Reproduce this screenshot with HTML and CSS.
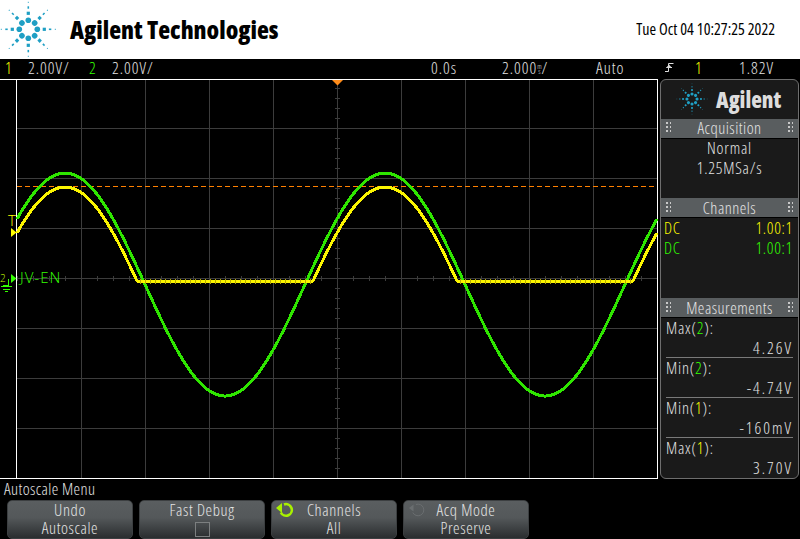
FILE: index.html
```html
<!DOCTYPE html>
<html lang="en">
<head>
    <meta charset="UTF-8">
    <title>Agilent Technologies</title>
    <link rel="stylesheet" href="styles.css">
</head>
<body>
    <!-- Shared logo star -->
    <svg class="defs" width="0" height="0">
        <defs>
            <g id="spoke">
                <circle cx="0" cy="-9" r="2.8"/>
                <rect x="-1.6" y="-17.6" width="3.2" height="3.2"/>
                <rect x="-0.8" y="-23" width="1.6" height="2.4"/>
                <rect x="-0.5" y="-27.5" width="1" height="1"/>
            </g>
            <g id="star">
                <use href="#spoke"/>
                <use href="#spoke" transform="rotate(45)"/>
                <use href="#spoke" transform="rotate(90)"/>
                <use href="#spoke" transform="rotate(135)"/>
                <use href="#spoke" transform="rotate(180)"/>
                <use href="#spoke" transform="rotate(225)"/>
                <use href="#spoke" transform="rotate(270)"/>
                <use href="#spoke" transform="rotate(315)"/>
            </g>
        </defs>
    </svg>

    <!-- Header -->
    <header class="brand">
        <svg class="brand-logo" width="58" height="58" viewBox="0 0 58 58">
            <use href="#star" transform="translate(28.3 28.3)"/>
        </svg>
        <div class="brand-name">Agilent Technologies</div>
        <div class="brand-date">Tue Oct 04 10:27:25 2022</div>
    </header>

    <!-- Status line -->
    <div class="status">
        <span class="ch1">1</span>
        <span>2.00V/</span>
        <span class="ch2">2</span>
        <span>2.00V/</span>
        <span>0.0s</span>
        <span class="time-scale">2.000<span class="stacked">m<br>s</span>/</span>
        <span>Auto</span>
        <svg class="edge-icon" width="9" height="11" viewBox="0 0 9 11">
            <path d="M0 9.5H3.5V1.5H8.5M1.5 5.5H7" fill="none" stroke="#ddd" stroke-width="1"/>
            <path d="M4 2.5L7 6H1Z" fill="#ddd"/>
        </svg>
        <span class="ch1">1</span>
        <span>1.82V</span>
    </div>

    <!-- Scope display and sidebar -->
    <main class="scope">
        <svg id="plot" class="plot" width="658" height="400" viewBox="0 79 658 400"></svg>

        <aside class="sidebar">
            <div class="side-logo">
                <svg width="36" height="36" viewBox="-18 -18 36 36">
                    <use href="#star" transform="scale(0.56)"/>
                </svg>
                <span>Agilent</span>
            </div>

            <div class="side-title"><b class="grip"></b>Acquisition<b class="grip"></b></div>
            <div class="side-block acq">
                <p>Normal</p>
                <p>1.25MSa/s</p>
            </div>

            <div class="side-title"><b class="grip"></b>Channels<b class="grip"></b></div>
            <div class="side-block channels">
                <p class="ch1"><span>DC</span><span>1.00:1</span></p>
                <p class="ch2"><span>DC</span><span>1.00:1</span></p>
            </div>

            <div class="side-title"><b class="grip"></b>Measurements<b class="grip"></b></div>
            <div class="measure">
                <div class="meas-item">
                    <p>Max(<span class="ch2">2</span>):</p>
                    <p class="meas-value">4.26V</p>
                </div>
                <div class="meas-item">
                    <p>Min(<span class="ch2">2</span>):</p>
                    <p class="meas-value">-4.74V</p>
                </div>
                <div class="meas-item">
                    <p>Min(<span class="ch1">1</span>):</p>
                    <p class="meas-value">-160mV</p>
                </div>
                <div class="meas-item">
                    <p>Max(<span class="ch1">1</span>):</p>
                    <p class="meas-value">3.70V</p>
                </div>
            </div>
        </aside>
    </main>

    <!-- Softkeys -->
    <div class="menu-title">Autoscale Menu</div>
    <div class="softkeys">
        <div class="softkey"><span>Undo</span><span>Autoscale</span></div>
        <div class="softkey"><span>Fast Debug</span><b class="checkbox"></b></div>
        <div class="softkey">
            <svg class="knob" width="18" height="18" viewBox="0 0 18 18">
                <path d="M8 3.5A5.8 5.8 0 1 1 4.8 11.5" fill="none" stroke="#a8f000" stroke-width="2.6"/>
                <path d="M0 7L6 2V12Z" fill="#a8f000"/>
            </svg>
            <span>Channels</span><span>All</span>
        </div>
        <div class="softkey">
            <svg class="knob" width="18" height="18" viewBox="0 0 18 18">
                <path d="M8 3.5A5.8 5.8 0 1 1 4.8 11.5" fill="none" stroke="#6a6e70" stroke-width="1"/>
                <path d="M1 7L5.5 3.5V10.5Z" fill="#6a6e70"/>
            </svg>
            <span>Acq Mode</span><span>Preserve</span>
        </div>
    </div>

    <script src="scope.js"></script>
</body>
</html>
```

FILE: styles.css
```css
/* === Shared === */
:root {
    --ch1: #ffff00;
    --ch2: #33ff00;
    --text: #e4e4e4;
    --panel: #1a1a1a;
    --bar: #595d5f;
    --logo: #1f9fc4;
}

* {
    margin: 0;
    padding: 0;
    box-sizing: border-box;
}

body {
    width: 800px;
    height: 539px;
    overflow: hidden;
    background: #000;
    color: var(--text);
    font-family: 'Open Sans', 'Liberation Sans', sans-serif;
    font-stretch: 75%;
    font-weight: 300;
    font-size: 16.5px;
}

.defs {
    position: absolute;
}

.ch1 { color: var(--ch1); }
.ch2 { color: var(--ch2); }

/* Header */
.brand {
    height: 59px;
    background: #fff;
    display: flex;
    align-items: center;
    color: #000;
}

.brand-logo {
    fill: var(--logo);
    flex: none;
    margin-right: 12px;
}

.brand-name {
    font-size: 24.5px;
    font-weight: 800;
    padding-bottom: 1px;
}

.brand-date {
    margin-left: auto;
    margin-right: 25px;
    padding-bottom: 1px;
    font-size: 16px;
    font-weight: 400;
}

/* Status line */
.status {
    height: 20px;
    padding: 0 0 4px 5px;
    display: grid;
    grid-template-columns: 23px 61px 23px 319px 71px 94px 69px 30px 44px auto;
    align-items: center;
    line-height: 17px;
    letter-spacing: 1px;
}

.time-scale {
    white-space: nowrap;
}

.stacked {
    display: inline-block;
    font-size: 7px;
    line-height: 5px;
    letter-spacing: 0;
    text-align: center;
}

/* Scope */
.scope {
    height: 400px;
    display: flex;
}

.plot {
    display: block;
    flex: none;
}

.plot text {
    font-size: 15px;
    font-stretch: 100%;
    letter-spacing: 1px;
}

/* Sidebar */
.sidebar {
    width: 139px;
    margin-left: 2px;
    background: var(--panel);
    border: 1px solid #6e6e6e;
    border-radius: 6px;
    overflow: hidden;
    display: flex;
    flex-direction: column;
}

.side-logo {
    height: 39px;
    padding-left: 13px;
    display: flex;
    align-items: center;
    gap: 6px;
    fill: var(--logo);
    font-size: 22px;
    font-weight: 800;
    color: #ddd;
}

.side-title {
    height: 20px;
    padding: 0 5px 1px;
    background: var(--bar);
    display: flex;
    align-items: center;
    justify-content: space-between;
    letter-spacing: 0.5px;
    border-bottom: 1px solid #000;
}

.grip {
    width: 5px;
    height: 11px;
    background-image: radial-gradient(circle at 1px 1px, #c8c8c8 1px, transparent 1px);
    background-size: 4px 4px;
}

.side-block {
    height: 60px;
}

.acq {
    margin-top: -1px;
    height: 61px;
    text-align: center;
    line-height: 20.5px;
    letter-spacing: 0.8px;
}

.channels {
    height: 80px;
    padding: 0 5px 0 3px;
    line-height: 19.5px;
    letter-spacing: 0.7px;
}

.channels p {
    display: flex;
    justify-content: space-between;
}

.measure {
    padding: 0 5px;
    line-height: 20px;
}

.meas-item {
    height: 40px;
    border-bottom: 1px solid #7a7a7a;
    letter-spacing: 0.8px;
}

.meas-item:last-child {
    border-bottom: none;
}

.meas-value {
    text-align: right;
    letter-spacing: 2px;
}

/* Softkeys */
.menu-title {
    height: 21px;
    padding-left: 4px;
    line-height: 19px;
    letter-spacing: 0.4px;
}

.softkeys {
    display: flex;
    gap: 6px;
    padding-left: 7px;
}

.softkey {
    position: relative;
    width: 126px;
    height: 39px;
    background: linear-gradient(#5a5e60 0%, #54585a 45%, #2a2d2f 100%);
    border: 1px solid #3c3f41;
    border-radius: 5px;
    display: flex;
    flex-direction: column;
    align-items: center;
    letter-spacing: 0.6px;
    line-height: 17.5px;
}

.knob {
    position: absolute;
    left: 4px;
    top: 0;
}

.checkbox {
    width: 15px;
    height: 15px;
    margin-top: 3px;
    border: 1px solid #7c7f80;
}
```

FILE: scope.js
```js
// Draws the graticule and the two traces into the plot
const svg = document.getElementById('plot');
const NS = 'http://www.w3.org/2000/svg';

function add(tag, attrs, text) {
    const el = document.createElementNS(NS, tag);
    Object.keys(attrs).forEach(k => el.setAttribute(k, attrs[k]));
    if (text) el.textContent = text;
    svg.appendChild(el);
    return el;
}

function line(x1, y1, x2, y2, stroke) {
    add('line', { x1, y1, x2, y2, stroke, 'shape-rendering': 'crispEdges' });
}

// Graticule
const GRID = '#3c3c3c';
for (let x = 81; x <= 593; x += 64) line(x + 0.5, 80, x + 0.5, 478, GRID);
for (let y = 128; y <= 428; y += 50) line(17, y + 0.5, 657, y + 0.5, GRID);

// Centre axis ticks
for (let x = 17; x <= 657; x += 16) line(x + 0.5, 276, x + 0.5, 281, GRID);
for (let y = 88; y <= 468; y += 10) line(335, y + 0.5, 340, y + 0.5, GRID);

// Frame
line(16.5, 79, 16.5, 478, '#fff');
line(657.5, 79, 657.5, 479, '#fff');
line(0, 79.5, 658, 79.5, '#fff');
line(0, 478.5, 658, 478.5, '#fff');

// Trigger level
add('line', { x1: 17, y1: 186.5, x2: 657, y2: 186.5, stroke: '#ff8000',
    'stroke-dasharray': '5 3', 'shape-rendering': 'crispEdges' });
add('path', { d: 'M332 80H343L337.5 85.5Z', fill: '#ff8c1a' });

// Traces: channel 2 is a sine, channel 1 follows it clamped at the flat level
const FLAT = 281;
const green = x => 284.5 - 111.5 * Math.cos((x - 65) / 320 * 2 * Math.PI);
const yellow = x => Math.min(FLAT, green(x) + 14);

function tracePath(fn) {
    let d = '';
    for (let x = 17; x <= 657; x++) d += (d ? 'L' : 'M') + x + ' ' + fn(x).toFixed(1);
    return d;
}

function trace(fn, stroke) {
    add('path', { d: tracePath(fn), fill: 'none', stroke, 'stroke-width': 3,
        'stroke-linejoin': 'round', 'shape-rendering': 'crispEdges' });
}

trace(green, '#2fe600');
trace(yellow, '#fbf400');

// Noise on the clamped part of channel 1
[[140, 312], [460, 632]].forEach(([a, b]) => {
    add('line', { x1: a, y1: FLAT, x2: b, y2: FLAT, stroke: '#b8a800', 'stroke-width': 5,
        'stroke-dasharray': '1 4', 'shape-rendering': 'crispEdges' });
});

// Channel markers
add('text', { x: 8, y: 226, fill: '#ffff00', style: 'letter-spacing:0' }, 'T');
add('path', { d: 'M11 228L16.5 232.5L11 237Z', fill: '#ffff00' });
add('text', { x: 20, y: 283, fill: '#33ff00' }, 'JV-EN');
add('path', { d: 'M11 274L16.5 278.5L11 283Z', fill: '#33ff00' });
add('text', { x: 0, y: 282, fill: '#c8ff00', style: 'font-size:10px;letter-spacing:0' }, '2');
add('path', { d: 'M8 279V285H3M1 286.5H12M3 289H10M5 291.5H8', fill: 'none', stroke: '#33ff00',
    'shape-rendering': 'crispEdges' });
```
